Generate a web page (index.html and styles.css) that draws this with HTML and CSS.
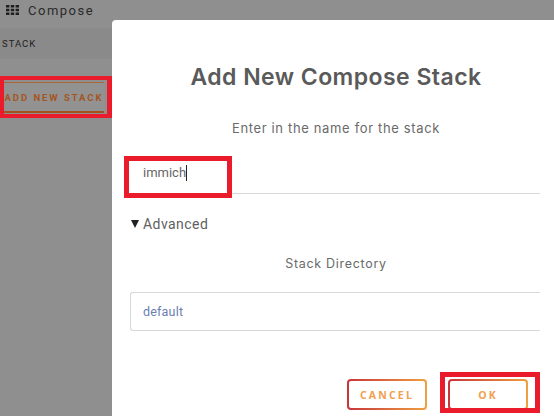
FILE: index.html
```html
<!DOCTYPE html>
<html lang="en">
<head>
<meta charset="utf-8">
<title>Add New Compose Stack</title>
<link rel="stylesheet" href="styles.css">
</head>
<body>
<div class="page">
  <header class="topbar">
    <svg class="grid-icon" viewBox="0 0 13 10" width="13" height="10" aria-hidden="true">
      <path fill="#1f1f1f" d="M0 0h3.4v2.6H0zM4.8 0h3.4v2.6H4.8zM9.6 0H13v2.6H9.6zM0 3.7h3.4v2.6H0zM4.8 3.7h3.4v2.6H4.8zM9.6 3.7H13v2.6H9.6zM0 7.4h3.4V10H0zM4.8 7.4h3.4V10H4.8zM9.6 7.4H13V10H9.6z"/>
    </svg>
    <span class="topbar-title">Compose</span>
  </header>
  <nav class="tabs"><span class="tab">STACK</span></nav>
  <div class="actions"><button class="add-btn">ADD NEW STACK</button></div>
</div>

<section class="modal">
  <h1 class="modal-title">Add New Compose Stack</h1>
  <p class="modal-sub">Enter in the name for the stack</p>
  <div class="name-field"><span class="name-value">immich</span><span class="caret"></span></div>
  <div class="advanced"><span class="tri"></span><span>Advanced</span></div>
  <p class="dir-label">Stack Directory</p>
  <div class="select">default</div>
  <div class="modal-actions">
    <button class="grad-btn cancel"><span>CANCEL</span></button>
    <button class="grad-btn ok"><span>OK</span></button>
  </div>
</section>

<div class="mark mark-add"></div>
<div class="mark mark-name"></div>
<div class="mark mark-ok"></div>
</body>
</html>
```
FILE: styles.css
```css
* { box-sizing: border-box; }
html, body { margin: 0; height: 100%; overflow: hidden; }
body { background: #8f8f8f; font-family: Roboto, "Liberation Sans", sans-serif; position: relative; }

.page { width: 112px; }
.topbar { height: 28px; display: flex; align-items: center; gap: 9px; padding: 0 0 8px 6px; background: #8f8f8f; }
.topbar-title { font-size: 13px; letter-spacing: 1.5px; color: #2a2a2a; }
.tabs { height: 31px; display: flex; align-items: center; background: #8a8a8a; padding-left: 2px; }
.tab { font-size: 9.5px; letter-spacing: 1px; color: #222; }
.actions { padding: 23px 0 0 4px; }
.add-btn {
  width: 100px; height: 31px; padding: 0; background: #929292; white-space: nowrap;
  border: 0; border-top: 1px solid #a8683a; border-bottom: 2px solid #a4521c;
  color: #a4561f; font: 700 9.5px Roboto, "Liberation Sans", sans-serif; letter-spacing: 1.95px;
}

.modal {
  position: absolute; left: 112px; top: 20px; width: 450px; height: 410px;
  background: #fff; border-radius: 4px; padding: 42px 20px 0 18px;
}
.modal-title { margin: 0; text-align: center; font: 600 23px/30px Inter, sans-serif; color: #5a5a5a; letter-spacing: 0.45px; }
.modal-sub { margin: 28px 0 0; text-align: center; font: 400 13px/16px Inter, sans-serif; color: #6a6a6a; letter-spacing: 0.65px; }
.name-field {
  margin-top: 20px; height: 38px; padding: 0 0 4px 13px; display: flex; align-items: center;
  border-bottom: 1px solid #d8d8d8; width: 410px;
}
.name-value { font-size: 13px; color: #666; }
.caret { width: 1px; height: 16px; background: #222; }
.advanced { margin: 21px 0 0 1px; display: flex; align-items: center; gap: 4px; font: 400 14px/18px Roboto, sans-serif; color: #5f5f5f; letter-spacing: 0.45px; }
.tri { width: 0; height: 0; border-left: 4.5px solid transparent; border-right: 4.5px solid transparent; border-top: 8px solid #222; }
.dir-label { margin: 23px 0 0; text-align: center; font: 400 12.5px/16px Inter, sans-serif; color: #6a6a6a; letter-spacing: 0.7px; }
.select {
  margin-top: 20px; width: 410px; height: 39px; padding-left: 12px; display: flex; align-items: center;
  border: 1px solid #d8d8d8; border-radius: 3px 0 0 3px; border-right: 0; font-size: 12.5px; color: #6a7fb0; letter-spacing: 0.2px;
}
.modal-actions { margin-top: 48px; display: flex; gap: 21px; padding-left: 217px; }
.grad-btn {
  width: 80px; height: 31px; padding: 2px; border: 0; border-radius: 4px;
  background: linear-gradient(90deg, #c8343a, #f0a040);
}
.grad-btn span {
  display: flex; align-items: center; justify-content: center; width: 100%; height: 100%;
  background: #fff; border-radius: 2px; color: #f0a050;
  font: 700 10.5px "Open Sans", sans-serif; letter-spacing: 2.2px;
}

.mark { position: absolute; border-style: solid; border-color: #ea1c2c; }
.mark-add { left: 0; top: 76px; width: 112px; height: 42px; border-width: 4px 5px 4px 4px; }
.mark-name { left: 124px; top: 156px; width: 108px; height: 42px; border-width: 5px; }
.mark-ok { left: 440px; top: 372px; width: 100px; height: 41px; border-width: 5px; }
```
